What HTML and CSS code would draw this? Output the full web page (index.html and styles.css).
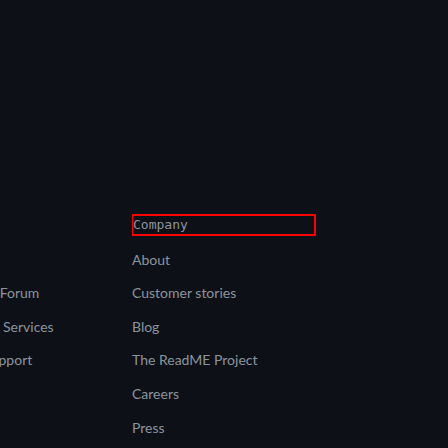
FILE: index.html
```html
<!DOCTYPE html>
<html lang="en">
<head>
<meta charset="utf-8">
<link rel="stylesheet" href="styles.css">
</head>
<body>
<footer class="footer">
  <nav class="cols">
    <section class="col">
      <h2 class="col-title">Support</h2>
      <ul class="links">
        <li><a href="#">Docs</a></li>
        <li><a href="#">Community Forum</a></li>
        <li><a href="#">Professional Services</a></li>
        <li><a href="#">Premium Support</a></li>
        <li><a href="#">Skills</a></li>
        <li><a href="#">Status</a></li>
      </ul>
    </section>
    <section class="col">
      <h2 class="col-title col-title--focus">Company</h2>
      <ul class="links">
        <li><a href="#">About</a></li>
        <li><a href="#">Customer stories</a></li>
        <li><a href="#">Blog</a></li>
        <li><a href="#">The ReadME Project</a></li>
        <li><a href="#">Careers</a></li>
        <li><a href="#">Press</a></li>
      </ul>
    </section>
  </nav>
</footer>
</body>
</html>
```
FILE: styles.css
```css
html, body {
  margin: 0;
  padding: 0;
  background: #0d1117;
  height: 100%;
  overflow: hidden;
}
.footer {
  padding-top: 214px;
}
.cols {
  display: grid;
  grid-template-columns: 184px 184px;
  column-gap: 23px;
  margin-left: -75px;
}
.col-title {
  margin: 0;
  font-family: "DejaVu Sans Mono", monospace;
  font-size: 13px;
  font-weight: normal;
  line-height: 18px;
  color: #8b949e;
  border: 2px solid transparent;
  border-left-width: 1px;
}
.col-title--focus {
  border-color: #ff0000;
}
.links {
  list-style: none;
  margin: 0;
  padding: 0;
}
.links li {
  margin-top: 12.6px;
  line-height: 21px;
  font-family: Lato, sans-serif;
  font-size: 14px;
}
.links a {
  color: #8b949e;
  text-decoration: none;
}
```
